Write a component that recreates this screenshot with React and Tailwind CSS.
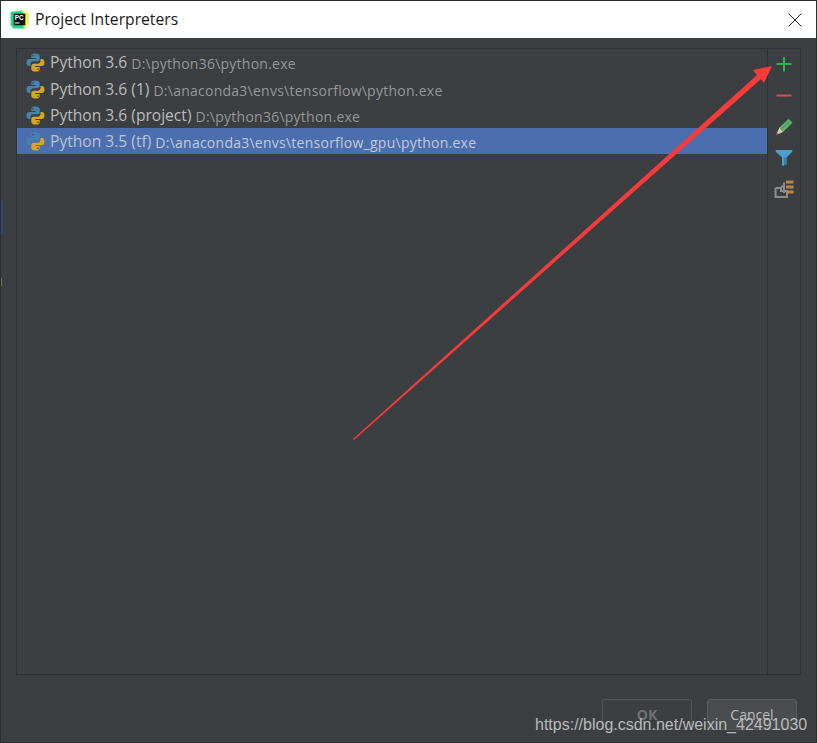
import React from "react";
import { X } from "lucide-react";

const rows = [
  { name: "Python 3.6", path: "D:\\python36\\python.exe", h: "h-[27px]" },
  { name: "Python 3.6 (1)", path: "D:\\anaconda3\\envs\\tensorflow\\python.exe", h: "h-[27px]" },
  { name: "Python 3.6 (project)", path: "D:\\python36\\python.exe", h: "h-[25px]" },
  { name: "Python 3.5 (tf)", path: "D:\\anaconda3\\envs\\tensorflow_gpu\\python.exe", h: "h-[26px]", selected: true },
];

const PythonIcon = () => (
  <svg width="19" height="19" viewBox="0 0 19 19" className="shrink-0">
    <path d="M9.3 0.5c-3.4 0-4 1.3-4 2.6v2h4.3v.8H3.2C1.6 5.9.5 7.100.5 9.500c0 2.400 1.100 3.600 2.500 3.600h1.500v-2.100c0-1.500 1.200-2.700 2.800-2.700h4.100c1.300 0 2.300-1 2.300-2.300V3.100c0-1.500-1.500-2.600-4.400-2.600z" fill="#4584ae" />
    <circle cx="7" cy="2.800" r="0.800" fill="#3c3f41" />
    <path d="M9.700 18.500c3.400 0 4-1.300 4-2.600v-2H9.400v-.8h6.400c1.600 0 2.700-1.200 2.700-3.600 0-2.400-1.100-3.600-2.500-3.600h-1.500V8c0 1.500-1.200 2.700-2.800 2.700H7.600c-1.300 0-2.300 1-2.300 2.300v2.900c0 1.500 1.500 2.600 4.400 2.600z" fill="#d6a61c" />
    <circle cx="12" cy="16.200" r="0.800" fill="#3c3f41" />
  </svg>
);

const PyCharmLogo = () => (
  <svg width="19" height="19" viewBox="0 0 18 18" className="shrink-0">
    <path d="M0.500 2 L11 0.500 L17.500 4 L17.500 12 L14 17.500 L3 17.500 L0.500 14 Z" fill="#21d789" />
    <path d="M10 0.500 L17.500 2.500 L17.500 13 L14.500 17.500 L12 15 L15 5 Z" fill="#fcf84a" />
    <rect x="3.500" y="3.500" width="11" height="11" fill="#111111" />
    <text x="4.500" y="9.500" fontSize="6" fontWeight="700" fill="#ffffff" fontFamily="'Liberation Sans', sans-serif">PC</text>
    <rect x="4.500" y="11.800" width="4.500" height="1" fill="#ffffff" />
  </svg>
);

const ToolIcons = () => (
  <div className="flex flex-col items-center pt-[6px] gap-[13.25px] w-[32px]">
    <svg width="18" height="18" viewBox="0 0 18 18">
      <path d="M1.500 9H16.500M9 2V16.500" stroke="#2fb54d" strokeWidth="2" fill="none" />
    </svg>
    <svg width="18" height="18" viewBox="0 0 18 18">
      <path d="M1.500 9.500H16.500" stroke="#c9544a" strokeWidth="2" fill="none" />
    </svg>
    <svg width="18" height="18" viewBox="0 0 18 18">
      <path d="M4.500 9.500L13.500 1 L17.500 4.500 L8 14 Z" fill="#62b96e" />
      <path d="M6 10.500L14.500 2.500 L15.500 3.500 L7 11.500 Z" fill="#4a9a58" />
      <path d="M4.500 9.500L8 14 L1 17 Z" fill="#d8c8a8" />
      <path d="M2.200 15L3.200 16.300 L1 17 Z" fill="#444444" />
    </svg>
    <svg width="18" height="18" viewBox="0 0 18 18">
      <path d="M0.500 1H17.500L17 3L11.500 8.500V15.500L7 17V8.500L1 3Z" fill="#4a9fd0" />
      <path d="M11.500 8.500V15.500L9 16.300V8.500Z" fill="#3a7fa8" />
    </svg>
    <svg width="20" height="18" viewBox="0 0 20 18">
      <path d="M1.500 8V17H13V11H7V8H1.500" stroke="#8a8c8e" strokeWidth="2" fill="none" />
      <path d="M7 6.500H10M10 2.500V13" stroke="#8a8c8e" strokeWidth="2" fill="none" />
      <rect x="12" y="0.500" width="7.500" height="3" fill="#b9844a" />
      <rect x="12" y="5.500" width="7.500" height="3" fill="#b9844a" />
      <rect x="12" y="10.500" width="7.500" height="3" fill="#b9844a" />
    </svg>
  </div>
);

export default function App() {
  return (
    <div className="relative w-[817px] h-[743px] flex flex-col bg-[#3c3f41] border border-[#2b2d2e] overflow-hidden font-['Open_Sans','Noto_Sans',sans-serif]">
      <div className="h-[37px] shrink-0 bg-white flex items-center pl-[9px] pr-[9px]">
        <PyCharmLogo />
        <span className="ml-[6px] text-[15.7px] text-[#1a1a1a]">Project Interpreters</span>
        <X className="ml-auto text-[#222222]" size={24} strokeWidth={1} />
      </div>

      <div className="flex-1 flex flex-col px-[15px] pt-[10px] pb-[5px]">
        <div className="h-[627px] flex border border-[#2f3133]">
          <div className="flex-1 flex flex-col">
            {rows.map((row) => (
              <div
                key={row.name}
                className={`${row.h} flex items-center pl-[9px] whitespace-nowrap ${row.selected ? "bg-[#4b6eaf] pt-[1px]" : ""}`}
              >
                <PythonIcon />
                <span className={`ml-[5px] text-[15.6px] ${row.selected ? "text-[#bcc3cf]" : "text-[#bbbbbb]"}`}>{row.name}</span>
                <span className={`ml-[4px] mt-[1px] text-[14px] tracking-[0.25px] ${row.selected ? "text-[#c3cad6]" : "text-[#959799]"}`}>{row.path}</span>
              </div>
            ))}
          </div>
          <div className="border-l border-[#2f3133]">
            <ToolIcons />
          </div>
        </div>

        <div className="flex justify-end gap-[15px] pt-[24px] pr-[4px]">
          <button className="w-[90px] h-[31px] flex items-start justify-center rounded-[3px] border border-[#535557] text-[14px] font-bold text-[#707274]">
            <span className="mt-[4px]">OK</span>
          </button>
          <button className="w-[90px] h-[31px] flex items-start justify-center rounded-[3px] border border-[#5a5c5e] bg-[#4a4d4f] text-[14px] text-[#bbbbbb]">
            <span className="mt-[4px]">Cancel</span>
          </button>
        </div>
      </div>

      {/* arrow drawn over the dialog */}
      <svg className="absolute left-[-1px] top-[-1px] pointer-events-none" width="817" height="743" viewBox="0 0 817 743">
        <polygon points="353,439 757,75 753,70 772,66 764,83 761,79 354,440" fill="#f73a3a" />
      </svg>

      {/* left edge leftovers from the window behind */}
      <div className="absolute left-0 top-[200px] w-[2px] h-[33px] bg-[#2f4a70]" />
      <div className="absolute left-0 top-[277px] w-[1px] h-[8px] bg-[#6f6f55]" />

      <span className="absolute left-[534px] top-[714px] text-[16px] leading-[20px] whitespace-nowrap text-[#b9babb] font-['Liberation_Sans',sans-serif]">
        https://blog.csdn.net/weixin_42491030
      </span>
    </div>
  );
}
